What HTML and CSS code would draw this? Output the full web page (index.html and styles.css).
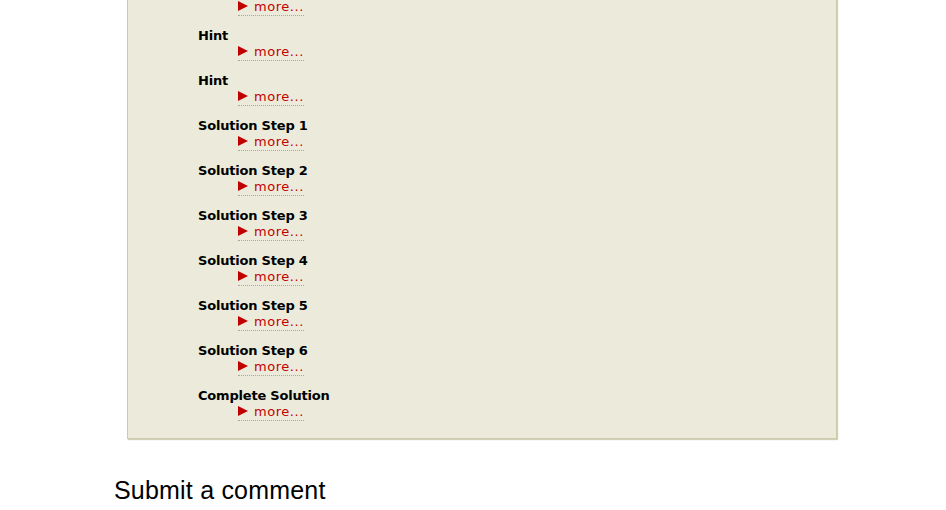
FILE: index.html
```html
<!DOCTYPE html>
<html>
<head>
<meta charset="utf-8">
<link rel="stylesheet" href="styles.css">
</head>
<body>
<div class="page">
  <div class="panel">
    <div class="item"><div class="title">Hint</div><a class="more" href="#"><span class="tri"></span>more...</a></div>
    <div class="item"><div class="title">Hint</div><a class="more" href="#"><span class="tri"></span>more...</a></div>
    <div class="item"><div class="title">Hint</div><a class="more" href="#"><span class="tri"></span>more...</a></div>
    <div class="item"><div class="title">Solution Step 1</div><a class="more" href="#"><span class="tri"></span>more...</a></div>
    <div class="item"><div class="title">Solution Step 2</div><a class="more" href="#"><span class="tri"></span>more...</a></div>
    <div class="item"><div class="title">Solution Step 3</div><a class="more" href="#"><span class="tri"></span>more...</a></div>
    <div class="item"><div class="title">Solution Step 4</div><a class="more" href="#"><span class="tri"></span>more...</a></div>
    <div class="item"><div class="title">Solution Step 5</div><a class="more" href="#"><span class="tri"></span>more...</a></div>
    <div class="item"><div class="title">Solution Step 6</div><a class="more" href="#"><span class="tri"></span>more...</a></div>
    <div class="item"><div class="title">Complete Solution</div><a class="more" href="#"><span class="tri"></span>more...</a></div>
  </div>
  <h2 class="comment-title">Submit a comment</h2>
</div>
</body>
</html>
```
FILE: styles.css
```css
html, body {
  margin: 0;
  padding: 0;
  background: #fff;
}
body {
  font-family: "DejaVu Sans", Verdana, sans-serif;
  color: #000;
  overflow: hidden;
}
.page {
  width: 736px;
  margin: -18px 0 0 114px;
}
.panel {
  margin: 0 0 0 13px;
  background: #ecebdb;
  border: 1px solid #cdcca6;
  border-left-color: #c9c9b8;
  box-shadow: 1px 1px 1px rgba(120, 120, 60, 0.35);
  padding: 0 0 5px 70px;
  box-sizing: border-box;
  width: 710px;
}
.item {
  margin-bottom: 12px;
}
.title {
  font-size: 13px;
  line-height: 16px;
  font-weight: bold;
  letter-spacing: -0.2px;
}
.more {
  display: block;
  width: fit-content;
  margin-left: 40px;
  font-size: 13px;
  line-height: 16px;
  letter-spacing: 0.55px;
  color: #c40000;
  text-decoration: none;
  border-bottom: 1px dotted #a8a8a0;
}
.tri {
  display: inline-block;
  width: 0;
  height: 0;
  border-left: 10px solid #c00000;
  border-top: 5.5px solid transparent;
  border-bottom: 5.5px solid transparent;
  margin-right: 6px;
}
.comment-title {
  font-family: "Liberation Sans", Arial, sans-serif;
  font-weight: normal;
  font-size: 25px;
  letter-spacing: 0.2px;
  margin: 37px 0 0 0;
}
```
